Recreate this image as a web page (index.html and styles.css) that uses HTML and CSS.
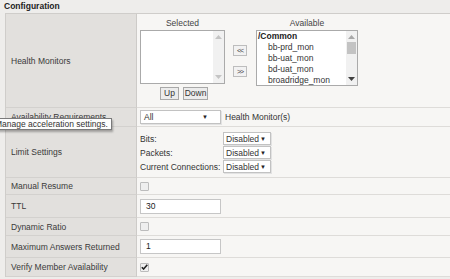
FILE: index.html
```html
<!DOCTYPE html>
<html lang="en">

<head>
    <meta charset="UTF-8">
    <title>Configuration</title>
    <link rel="stylesheet" href="styles.css">
</head>

<body>
    <div class="section-title">Configuration</div>
    <table class="config">
        <tr class="r-monitors">
            <td class="lbl">Health Monitors</td>
            <td class="val val-top">
                <div class="dual">
                    <div class="pick pick-sel">
                        <div class="pick-title">Selected</div>
                        <div class="listbox listbox-sel">
                            <div class="list-items"></div>
                            <div class="vscroll">
                                <svg class="arr arr-up" width="7" height="4" viewBox="0 0 7 4"><path d="M0 4 L3.5 0 L7 4 Z" fill="#c4c4c4"/></svg>
                                <svg class="arr arr-dn" width="7" height="4" viewBox="0 0 7 4"><path d="M0 0 L3.5 4 L7 0 Z" fill="#c4c4c4"/></svg>
                            </div>
                        </div>
                        <div class="order-btns">
                            <button class="btn btn-up">Up</button>
                            <button class="btn btn-down">Down</button>
                        </div>
                    </div>
                    <div class="move-btns">
                        <button class="btn btn-move">&lt;&lt;</button>
                        <button class="btn btn-move">&gt;&gt;</button>
                    </div>
                    <div class="pick pick-avail">
                        <div class="pick-title">Available</div>
                        <div class="listbox listbox-avail">
                            <div class="list-items">
                                <div class="item item-group">/Common</div>
                                <div class="item">bb-prd_mon</div>
                                <div class="item">bb-uat_mon</div>
                                <div class="item">bd-uat_mon</div>
                                <div class="item">broadridge_mon</div>
                            </div>
                            <div class="vscroll">
                                <svg class="arr arr-up" width="7" height="4" viewBox="0 0 7 4"><path d="M0 4 L3.5 0 L7 4 Z" fill="#a8a8a8"/></svg>
                                <div class="thumb"></div>
                                <svg class="arr arr-dn" width="7" height="4" viewBox="0 0 7 4"><path d="M0 0 L3.5 4 L7 0 Z" fill="#404040"/></svg>
                            </div>
                        </div>
                    </div>
                </div>
            </td>
        </tr>
        <tr class="r-avail">
            <td class="lbl">Availability Requirements</td>
            <td class="val">
                <div class="inline">
                    <div class="dropdown dropdown-all">All<span class="caret">&#9660;</span></div>
                    <span class="after-text">Health Monitor(s)</span>
                </div>
            </td>
        </tr>
        <tr class="r-limits">
            <td class="lbl">Limit Settings</td>
            <td class="val val-top">
                <div class="limits">
                    <span class="limit-name">Bits:</span>
                    <div class="dropdown dropdown-small">Disabled<span class="caret">&#9660;</span></div>
                    <span class="limit-name">Packets:</span>
                    <div class="dropdown dropdown-small">Disabled<span class="caret">&#9660;</span></div>
                    <span class="limit-name">Current Connections:</span>
                    <div class="dropdown dropdown-small">Disabled<span class="caret">&#9660;</span></div>
                </div>
            </td>
        </tr>
        <tr class="r-check">
            <td class="lbl">Manual Resume</td>
            <td class="val"><span class="checkbox"></span></td>
        </tr>
        <tr class="r-input">
            <td class="lbl">TTL</td>
            <td class="val"><div class="textbox">30</div></td>
        </tr>
        <tr class="r-check2">
            <td class="lbl">Dynamic Ratio</td>
            <td class="val"><span class="checkbox"></span></td>
        </tr>
        <tr class="r-input2">
            <td class="lbl">Maximum Answers Returned</td>
            <td class="val"><div class="textbox">1</div></td>
        </tr>
        <tr class="r-check3">
            <td class="lbl">Verify Member Availability</td>
            <td class="val">
                <span class="checkbox checked">
                    <svg width="7" height="6" viewBox="0 0 7 6"><path d="M0.8 3.2 L2.6 5 L6.3 0.8" fill="none" stroke="#222" stroke-width="1.6"/></svg>
                </span>
            </td>
        </tr>
    </table>

    <div class="tooltip">Manage acceleration settings.</div>
</body>

</html>
```

FILE: styles.css
```css
* {
    box-sizing: border-box;
    padding: 0;
    margin: 0;
}

body {
    width: 450px;
    height: 279px;
    overflow: hidden;
    background-color: #eeedeb;
    font-family: "Liberation Sans", Arial, sans-serif;
    font-size: 8.5px;
    color: #333;
}

.section-title {
    height: 13px;
    padding: 1px 0 0 4px;
    line-height: 10px;
    font-weight: bold;
    color: #222;
}

.config {
    margin-left: 5px;
    width: 445px;
    border-collapse: separate;
    border-spacing: 0;
    border-top: 1px solid #cfcdca;
    border-left: 1px solid #cfcdca;
}

.config td {
    vertical-align: middle;
}

.lbl {
    width: 131px;
    padding-left: 5px;
    background-color: #e2e0dd;
    border-right: 1px solid #cdcbc8;
    border-bottom: 1px solid #d3d1ce;
    color: #3a3a3a;
}

.val {
    padding-left: 3px;
    background-color: #f7f6f4;
    border-bottom: 1px solid #dedcd9;
}

.config .val-top {
    vertical-align: top;
}

.r-monitors { height: 94px; }
.r-avail { height: 19px; }
.r-limits { height: 51px; }
.r-check { height: 17px; }
.r-input { height: 23px; }
.r-check2 { height: 18px; }
.r-input2 { height: 22px; }
.r-check3 { height: 19px; }

/* health monitor picker */
.dual {
    display: flex;
    align-items: flex-start;
    padding-top: 4px;
}

.pick-title {
    height: 12px;
    line-height: 10px;
    text-align: center;
    color: #444;
}

.pick-sel {
    width: 85px;
}

.pick-avail {
    width: 102px;
    margin-left: 9px;
}

.listbox {
    display: flex;
    background-color: #fff;
    border: 1px solid #aaa;
}

.listbox-sel {
    height: 54px;
}

.listbox-avail {
    height: 56px;
}

.list-items {
    flex: 1;
    padding-left: 1px;
    overflow: hidden;
}

.item {
    height: 11px;
    line-height: 11px;
    padding-left: 10px;
    white-space: nowrap;
    color: #333;
}

.item-group {
    padding-left: 0;
    font-weight: bold;
    color: #222;
}

.vscroll {
    width: 11px;
    display: flex;
    flex-direction: column;
    align-items: center;
    padding: 4px 0 4px;
    background-color: #f1f1f1;
}

.arr-dn {
    margin-top: auto;
}

.thumb {
    width: 9px;
    height: 12px;
    margin-top: 3px;
    background-color: #c3c3c3;
}

.order-btns {
    display: flex;
    gap: 4px;
    padding-left: 20px;
    margin-top: 3px;
}

.btn {
    height: 13px;
    border: 1px solid #a8a8a8;
    background-color: #ececec;
    font-family: "Liberation Sans", Arial, sans-serif;
    font-size: 8.5px;
    line-height: 11px;
    color: #333;
}

.btn-up {
    width: 19px;
}

.btn-down {
    width: 25px;
}

.move-btns {
    display: flex;
    flex-direction: column;
    gap: 10px;
    margin: 27px 0 0 8px;
}

.btn-move {
    width: 14px;
    height: 11px;
    padding: 0;
    font-size: 7px;
    line-height: 9px;
    border-color: #bdbdbd;
    background-color: #f2f2f2;
    letter-spacing: -1px;
    color: #444;
}

/* dropdowns and inputs */
.inline {
    display: flex;
    align-items: center;
}

.dropdown {
    display: flex;
    align-items: center;
    background-color: #fff;
    border: 1px solid #c2c2c2;
    box-shadow: 1px 1px 0 #e2e2e2;
    color: #333;
}

.caret {
    margin-left: auto;
    font-size: 6px;
    color: #222;
}

.dropdown-all {
    width: 81px;
    height: 14px;
    padding: 0 12px 0 3px;
}

.after-text {
    margin-left: 4px;
}

.limits {
    display: grid;
    grid-template-columns: 83px 48px;
    grid-auto-rows: 13px;
    row-gap: 1px;
    align-items: center;
    padding-top: 5px;
}

.dropdown-small {
    width: 48px;
    height: 13px;
    padding: 0 4px 0 2px;
}

.textbox {
    width: 81px;
    height: 15px;
    padding-left: 5px;
    line-height: 13px;
    background-color: #fff;
    border: 1px solid #c6c6c6;
    color: #222;
}

.checkbox {
    display: flex;
    align-items: center;
    justify-content: center;
    width: 9px;
    height: 9px;
    border: 1px solid #bcbcbc;
    border-radius: 1px;
    background-color: #eeeeee;
}

.checkbox.checked {
    background-color: #f0f0f0;
}

.tooltip {
    position: absolute;
    left: -9px;
    top: 118px;
    height: 12px;
    padding: 0 3px;
    line-height: 10px;
    white-space: nowrap;
    background-color: #fdfdfd;
    border: 1px solid #7a7a7a;
    box-shadow: 1px 2px 2px rgba(0, 0, 0, 0.3);
    color: #333;
}
```
